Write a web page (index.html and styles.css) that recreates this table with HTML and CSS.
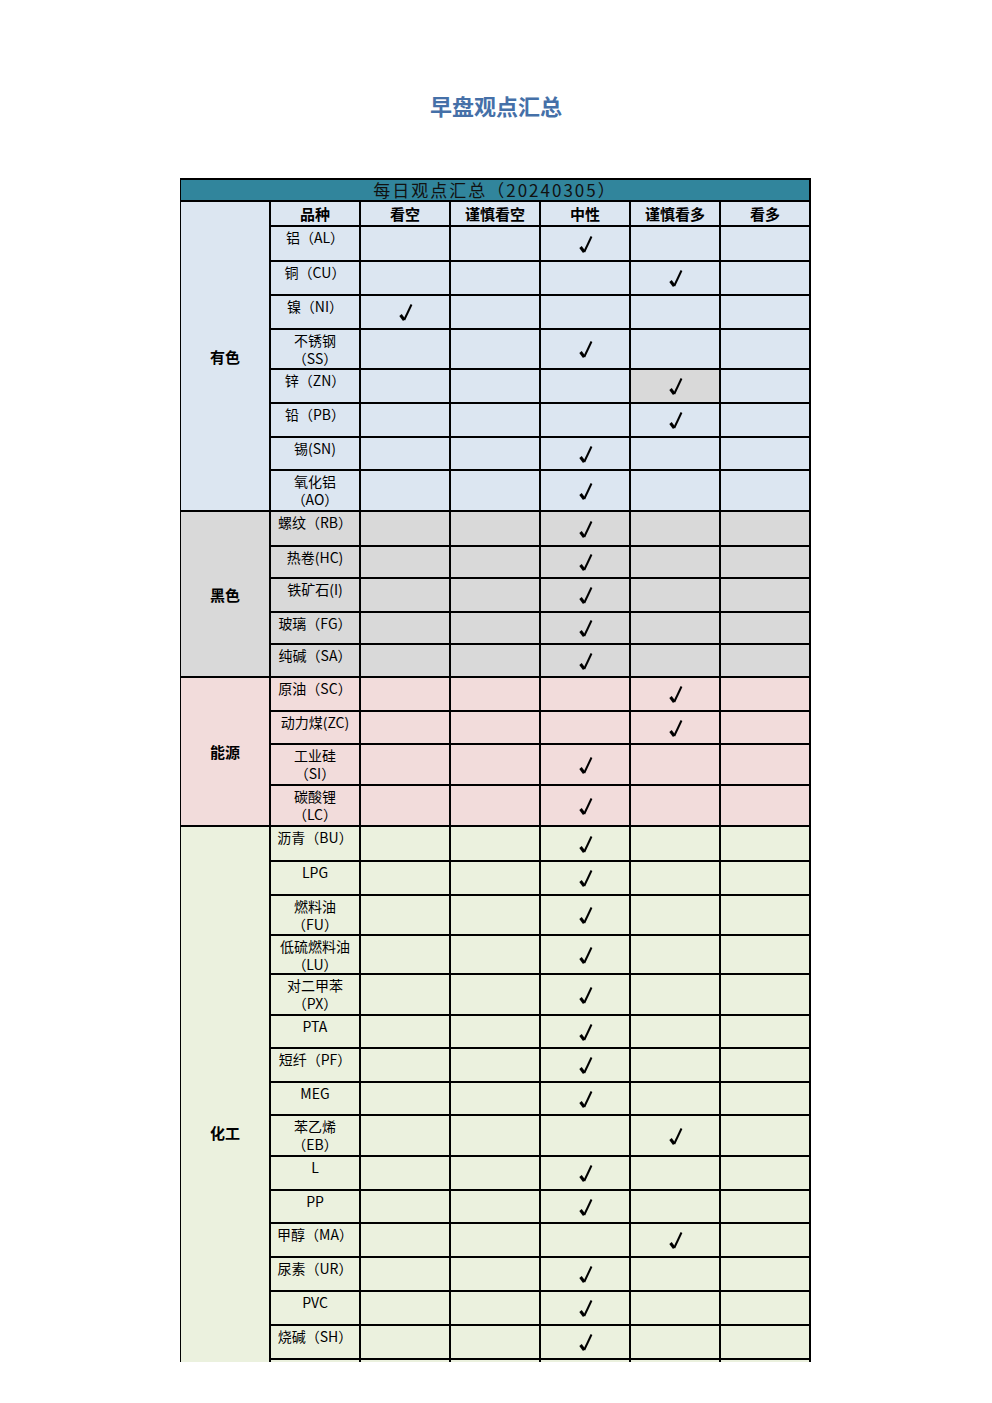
FILE: index.html
```html
<!DOCTYPE html>
<html lang="zh-CN">
<head>
<meta charset="utf-8">
<title>早盘观点汇总</title>
<link rel="stylesheet" href="styles.css">
</head>
<body>
<h1 class="page-title">早盘观点汇总</h1>
<div class="sheet-clip">
  <div class="sheet">
    <div class="title-row">每日观点汇总（20240305）</div>

    <div class="cat b cat-ys">有色</div>
    <div class="cat g cat-hs">黑色</div>
    <div class="cat p cat-ny">能源</div>
    <div class="cat gr cat-hg">化工</div>

    <div class="head b">品种</div><div class="head b">看空</div><div class="head b">谨慎看空</div><div class="head b">中性</div><div class="head b">谨慎看多</div><div class="head b">看多</div>

    <!-- 有色 -->
    <div class="name b">铝（AL）</div><div class="c b"></div><div class="c b"></div><div class="c b"><svg class="ck" viewBox="0 0 14 19"><path d="M1.5 12 L5.2 17" /><path class="thin" d="M5.2 17 L12.5 1.5" /></svg></div><div class="c b"></div><div class="c b"></div>
    <div class="name b">铜（CU）</div><div class="c b"></div><div class="c b"></div><div class="c b"></div><div class="c b"><svg class="ck" viewBox="0 0 14 19"><path d="M1.5 12 L5.2 17" /><path class="thin" d="M5.2 17 L12.5 1.5" /></svg></div><div class="c b"></div>
    <div class="name b">镍（NI）</div><div class="c b"><svg class="ck" viewBox="0 0 14 19"><path d="M1.5 12 L5.2 17" /><path class="thin" d="M5.2 17 L12.5 1.5" /></svg></div><div class="c b"></div><div class="c b"></div><div class="c b"></div><div class="c b"></div>
    <div class="name b">不锈钢<br>（SS）</div><div class="c b"></div><div class="c b"></div><div class="c b"><svg class="ck" viewBox="0 0 14 19"><path d="M1.5 12 L5.2 17" /><path class="thin" d="M5.2 17 L12.5 1.5" /></svg></div><div class="c b"></div><div class="c b"></div>
    <div class="name b">锌（ZN）</div><div class="c b"></div><div class="c b"></div><div class="c b"></div><div class="c g"><svg class="ck" viewBox="0 0 14 19"><path d="M1.5 12 L5.2 17" /><path class="thin" d="M5.2 17 L12.5 1.5" /></svg></div><div class="c b"></div>
    <div class="name b">铅（PB）</div><div class="c b"></div><div class="c b"></div><div class="c b"></div><div class="c b"><svg class="ck" viewBox="0 0 14 19"><path d="M1.5 12 L5.2 17" /><path class="thin" d="M5.2 17 L12.5 1.5" /></svg></div><div class="c b"></div>
    <div class="name b">锡(SN)</div><div class="c b"></div><div class="c b"></div><div class="c b"><svg class="ck" viewBox="0 0 14 19"><path d="M1.5 12 L5.2 17" /><path class="thin" d="M5.2 17 L12.5 1.5" /></svg></div><div class="c b"></div><div class="c b"></div>
    <div class="name b">氧化铝<br>（AO）</div><div class="c b"></div><div class="c b"></div><div class="c b"><svg class="ck" viewBox="0 0 14 19"><path d="M1.5 12 L5.2 17" /><path class="thin" d="M5.2 17 L12.5 1.5" /></svg></div><div class="c b"></div><div class="c b"></div>

    <!-- 黑色 -->
    <div class="name g">螺纹（RB）</div><div class="c g"></div><div class="c g"></div><div class="c g"><svg class="ck" viewBox="0 0 14 19"><path d="M1.5 12 L5.2 17" /><path class="thin" d="M5.2 17 L12.5 1.5" /></svg></div><div class="c g"></div><div class="c g"></div>
    <div class="name g">热卷(HC)</div><div class="c g"></div><div class="c g"></div><div class="c g"><svg class="ck" viewBox="0 0 14 19"><path d="M1.5 12 L5.2 17" /><path class="thin" d="M5.2 17 L12.5 1.5" /></svg></div><div class="c g"></div><div class="c g"></div>
    <div class="name g">铁矿石(I)</div><div class="c g"></div><div class="c g"></div><div class="c g"><svg class="ck" viewBox="0 0 14 19"><path d="M1.5 12 L5.2 17" /><path class="thin" d="M5.2 17 L12.5 1.5" /></svg></div><div class="c g"></div><div class="c g"></div>
    <div class="name g">玻璃（FG）</div><div class="c g"></div><div class="c g"></div><div class="c g"><svg class="ck" viewBox="0 0 14 19"><path d="M1.5 12 L5.2 17" /><path class="thin" d="M5.2 17 L12.5 1.5" /></svg></div><div class="c g"></div><div class="c g"></div>
    <div class="name g">纯碱（SA）</div><div class="c g"></div><div class="c g"></div><div class="c g"><svg class="ck" viewBox="0 0 14 19"><path d="M1.5 12 L5.2 17" /><path class="thin" d="M5.2 17 L12.5 1.5" /></svg></div><div class="c g"></div><div class="c g"></div>

    <!-- 能源 -->
    <div class="name p">原油（SC）</div><div class="c p"></div><div class="c p"></div><div class="c p"></div><div class="c p"><svg class="ck" viewBox="0 0 14 19"><path d="M1.5 12 L5.2 17" /><path class="thin" d="M5.2 17 L12.5 1.5" /></svg></div><div class="c p"></div>
    <div class="name p">动力煤(ZC)</div><div class="c p"></div><div class="c p"></div><div class="c p"></div><div class="c p"><svg class="ck" viewBox="0 0 14 19"><path d="M1.5 12 L5.2 17" /><path class="thin" d="M5.2 17 L12.5 1.5" /></svg></div><div class="c p"></div>
    <div class="name p">工业硅<br>（SI）</div><div class="c p"></div><div class="c p"></div><div class="c p"><svg class="ck" viewBox="0 0 14 19"><path d="M1.5 12 L5.2 17" /><path class="thin" d="M5.2 17 L12.5 1.5" /></svg></div><div class="c p"></div><div class="c p"></div>
    <div class="name p">碳酸锂<br>（LC）</div><div class="c p"></div><div class="c p"></div><div class="c p"><svg class="ck" viewBox="0 0 14 19"><path d="M1.5 12 L5.2 17" /><path class="thin" d="M5.2 17 L12.5 1.5" /></svg></div><div class="c p"></div><div class="c p"></div>

    <!-- 化工 -->
    <div class="name gr">沥青（BU）</div><div class="c gr"></div><div class="c gr"></div><div class="c gr"><svg class="ck" viewBox="0 0 14 19"><path d="M1.5 12 L5.2 17" /><path class="thin" d="M5.2 17 L12.5 1.5" /></svg></div><div class="c gr"></div><div class="c gr"></div>
    <div class="name gr">LPG</div><div class="c gr"></div><div class="c gr"></div><div class="c gr"><svg class="ck" viewBox="0 0 14 19"><path d="M1.5 12 L5.2 17" /><path class="thin" d="M5.2 17 L12.5 1.5" /></svg></div><div class="c gr"></div><div class="c gr"></div>
    <div class="name gr">燃料油<br>（FU）</div><div class="c gr"></div><div class="c gr"></div><div class="c gr"><svg class="ck" viewBox="0 0 14 19"><path d="M1.5 12 L5.2 17" /><path class="thin" d="M5.2 17 L12.5 1.5" /></svg></div><div class="c gr"></div><div class="c gr"></div>
    <div class="name gr">低硫燃料油<br>（LU）</div><div class="c gr"></div><div class="c gr"></div><div class="c gr"><svg class="ck" viewBox="0 0 14 19"><path d="M1.5 12 L5.2 17" /><path class="thin" d="M5.2 17 L12.5 1.5" /></svg></div><div class="c gr"></div><div class="c gr"></div>
    <div class="name gr">对二甲苯<br>（PX）</div><div class="c gr"></div><div class="c gr"></div><div class="c gr"><svg class="ck" viewBox="0 0 14 19"><path d="M1.5 12 L5.2 17" /><path class="thin" d="M5.2 17 L12.5 1.5" /></svg></div><div class="c gr"></div><div class="c gr"></div>
    <div class="name gr">PTA</div><div class="c gr"></div><div class="c gr"></div><div class="c gr"><svg class="ck" viewBox="0 0 14 19"><path d="M1.5 12 L5.2 17" /><path class="thin" d="M5.2 17 L12.5 1.5" /></svg></div><div class="c gr"></div><div class="c gr"></div>
    <div class="name gr">短纤（PF）</div><div class="c gr"></div><div class="c gr"></div><div class="c gr"><svg class="ck" viewBox="0 0 14 19"><path d="M1.5 12 L5.2 17" /><path class="thin" d="M5.2 17 L12.5 1.5" /></svg></div><div class="c gr"></div><div class="c gr"></div>
    <div class="name gr">MEG</div><div class="c gr"></div><div class="c gr"></div><div class="c gr"><svg class="ck" viewBox="0 0 14 19"><path d="M1.5 12 L5.2 17" /><path class="thin" d="M5.2 17 L12.5 1.5" /></svg></div><div class="c gr"></div><div class="c gr"></div>
    <div class="name gr">苯乙烯<br>（EB）</div><div class="c gr"></div><div class="c gr"></div><div class="c gr"></div><div class="c gr"><svg class="ck" viewBox="0 0 14 19"><path d="M1.5 12 L5.2 17" /><path class="thin" d="M5.2 17 L12.5 1.5" /></svg></div><div class="c gr"></div>
    <div class="name gr">L</div><div class="c gr"></div><div class="c gr"></div><div class="c gr"><svg class="ck" viewBox="0 0 14 19"><path d="M1.5 12 L5.2 17" /><path class="thin" d="M5.2 17 L12.5 1.5" /></svg></div><div class="c gr"></div><div class="c gr"></div>
    <div class="name gr">PP</div><div class="c gr"></div><div class="c gr"></div><div class="c gr"><svg class="ck" viewBox="0 0 14 19"><path d="M1.5 12 L5.2 17" /><path class="thin" d="M5.2 17 L12.5 1.5" /></svg></div><div class="c gr"></div><div class="c gr"></div>
    <div class="name gr">甲醇（MA）</div><div class="c gr"></div><div class="c gr"></div><div class="c gr"></div><div class="c gr"><svg class="ck" viewBox="0 0 14 19"><path d="M1.5 12 L5.2 17" /><path class="thin" d="M5.2 17 L12.5 1.5" /></svg></div><div class="c gr"></div>
    <div class="name gr">尿素（UR）</div><div class="c gr"></div><div class="c gr"></div><div class="c gr"><svg class="ck" viewBox="0 0 14 19"><path d="M1.5 12 L5.2 17" /><path class="thin" d="M5.2 17 L12.5 1.5" /></svg></div><div class="c gr"></div><div class="c gr"></div>
    <div class="name gr">PVC</div><div class="c gr"></div><div class="c gr"></div><div class="c gr"><svg class="ck" viewBox="0 0 14 19"><path d="M1.5 12 L5.2 17" /><path class="thin" d="M5.2 17 L12.5 1.5" /></svg></div><div class="c gr"></div><div class="c gr"></div>
    <div class="name gr">烧碱（SH）</div><div class="c gr"></div><div class="c gr"></div><div class="c gr"><svg class="ck" viewBox="0 0 14 19"><path d="M1.5 12 L5.2 17" /><path class="thin" d="M5.2 17 L12.5 1.5" /></svg></div><div class="c gr"></div><div class="c gr"></div>
    <div class="name gr"></div><div class="c gr"></div><div class="c gr"></div><div class="c gr"></div><div class="c gr"></div><div class="c gr"></div>
    <div class="name gr"></div><div class="c gr"></div><div class="c gr"></div><div class="c gr"></div><div class="c gr"></div><div class="c gr"></div>
  </div>
</div>
</body>
</html>
```

FILE: styles.css
```css
html, body {
  margin: 0;
  padding: 0;
  background: #ffffff;
}

body {
  font-family: "Noto Sans CJK SC", "Noto Sans", sans-serif;
  color: #000;
}

.page-title {
  margin: 0;
  padding-top: 90px;
  height: 30px;
  line-height: 30px;
  text-align: center;
  font-size: 22px;
  font-weight: 700;
  color: #4570a8;
  letter-spacing: 0;
}

.sheet-clip {
  margin-top: 58px;
  margin-left: 180px;
  width: 631px;
  height: 1184px;
  overflow: hidden;
}

.sheet {
  display: grid;
  grid-template-columns: repeat(7, 88px);
  grid-template-rows:
    20px 23px
    33px 32px 32px 38px 32px 32px 31px 39px
    33px 30px 32px 30px 31px
    32px 31px 39px 39px
    33px 32px 38px 37px 39px 31px 32px 31px 39px 32px 31px 32px 32px 32px 32px
    38px 38px;
  gap: 2px;
  padding: 2px 2px 2px 1px;
  background: #000;
  width: 628px;
}

.title-row {
  grid-column: 1 / -1;
  grid-row: 1;
  background: #31859c;
  text-align: center;
  font-size: 17px;
  line-height: 20px;
  letter-spacing: 2px;
  color: #111;
}

.b { background: #dce6f1; }
.g { background: #d9d9d9; }
.p { background: #f2dcdb; }
.gr { background: #ebf1de; }

.cat {
  grid-column: 1;
  display: flex;
  align-items: center;
  justify-content: center;
  font-size: 15px;
  font-weight: 700;
}

.cat-ys { grid-row: 2 / 11; }
.cat-hs { grid-row: 11 / 16; }
.cat-ny { grid-row: 16 / 20; }
.cat-hg { grid-row: 20 / 37; }

.head {
  text-align: center;
  font-size: 15px;
  font-weight: 700;
  line-height: 23px;
}

.name {
  text-align: center;
  font-size: 14px;
  line-height: 18px;
  padding-top: 1px;
  white-space: nowrap;
  overflow: hidden;
}

.c {
  display: flex;
  align-items: center;
  justify-content: center;
}

.ck {
  width: 14px;
  height: 19px;
  margin-left: 2px;
  margin-top: 1px;
  fill: none;
  stroke: #000;
  stroke-width: 3;
}

.ck .thin {
  stroke-width: 2;
}
```
